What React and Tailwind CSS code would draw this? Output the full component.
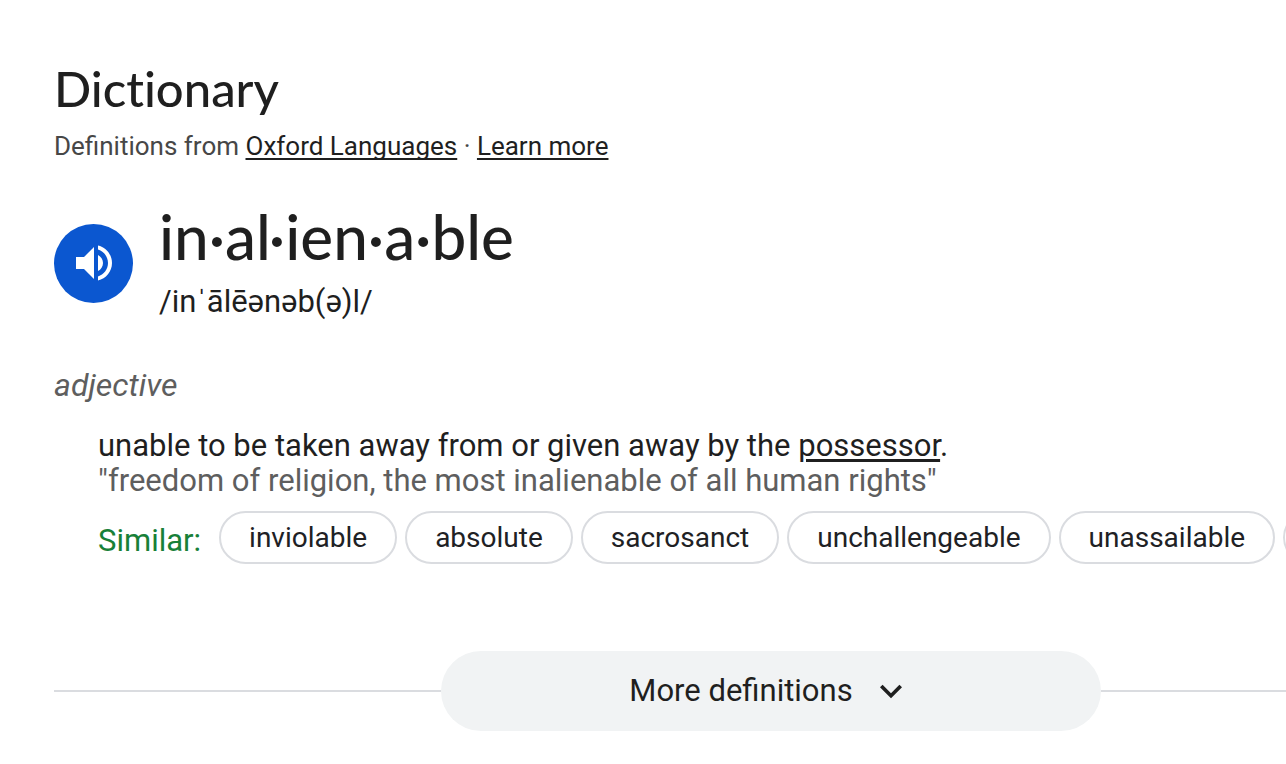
import React from "react";

const similarWords = [
  "inviolable",
  "absolute",
  "sacrosanct",
  "unchallengeable",
  "unassailable",
];

const SpeakerIcon = () => (
  <svg viewBox="0 0 24 24" className="size-12 fill-white" aria-hidden="true">
    <path d="M3 9v6h4l5 5V4L7 9H3zm13.5 3c0-1.77-1.02-3.29-2.5-4.03v8.05c1.48-.73 2.5-2.25 2.5-4.02zM14 3.23v2.06c2.89.86 5 3.54 5 6.71s-2.11 5.85-5 6.71v2.06c4.01-.91 7-4.49 7-8.77s-2.99-7.86-7-8.77z" />
  </svg>
);

const ChevronIcon = () => (
  <svg viewBox="0 0 24 24" className="size-11 fill-current" aria-hidden="true">
    <path d="M7.41 8.59L12 13.17l4.59-4.58L18 10l-6 6-6-6 1.41-1.41z" />
  </svg>
);

export default function App() {
  return (
    <main className="overflow-hidden bg-white pt-15 pl-[54px] font-['Roboto',sans-serif] text-[#1f1f1f]">
      <header>
        <h1 className="font-['Lato',sans-serif] text-[49px] leading-14 font-medium [font-variant-ligatures:none]">Dictionary</h1>
        <p className="mt-3 text-[26px] leading-9 text-[#474747]">
          Definitions from{" "}
          <a href="#oxford" className="text-[#1f1f1f] underline decoration-2 underline-offset-3 [text-decoration-skip-ink:none]">Oxford Languages</a>
          {" · "}
          <a href="#learn" className="text-[#1f1f1f] underline decoration-2 underline-offset-3">Learn more</a>
        </p>
      </header>

      <section className="mt-10 flex items-center">
        <button type="button" aria-label="Listen" className="flex size-[79px] shrink-0 items-center justify-center rounded-full bg-[#0b57d0]">
          <SpeakerIcon />
        </button>
        <div className="ml-[26px]">
          <h2 className="font-['Lato',sans-serif] text-[62px] leading-16 font-medium">in·al·ien·a·ble</h2>
          <p className="mt-[14px] text-[31px] leading-10">/inˈālēənəb(ə)l/</p>
        </div>
      </section>

      <p className="mt-[43px] text-[32px] leading-10 text-[#5e5e5e] italic">adjective</p>

      <section className="mt-[23px] ml-11">
        <p className="text-[31px] leading-[35px]">
          unable to be taken away from or given away by the{" "}
          <a href="#possessor" className="underline decoration-3 underline-offset-3">possessor</a>.
        </p>
        <p className="text-[31px] leading-[35px] text-[#5e5e5e]">
          "freedom of religion, the most inalienable of all human rights"
        </p>
        <div className="mt-[13px] flex gap-2">
          <span className="mr-[10px] pt-2 text-[31px] leading-11 text-[#188038]">Similar:</span>
          {similarWords.map((word) => (
            <button key={word} type="button" className="h-[53px] shrink-0 rounded-full border-2 border-[#dadce0] px-7 text-[28px] text-[#202124]">
              {word}
            </button>
          ))}
          <button type="button" aria-label="More similar words" className="h-[53px] w-40 shrink-0 rounded-full border-2 border-[#dadce0]" />
        </div>
      </section>

      <div className="mt-[87px] flex items-center">
        <div className="h-0.5 w-[387px] bg-[#dadce0]" />
        <button type="button" className="flex h-20 w-[660px] items-center justify-center gap-4 rounded-full bg-[#f1f3f4] text-[31px]">
          More definitions
          <ChevronIcon />
        </button>
        <div className="h-0.5 flex-1 bg-[#dadce0]" />
      </div>
    </main>
  );
}
